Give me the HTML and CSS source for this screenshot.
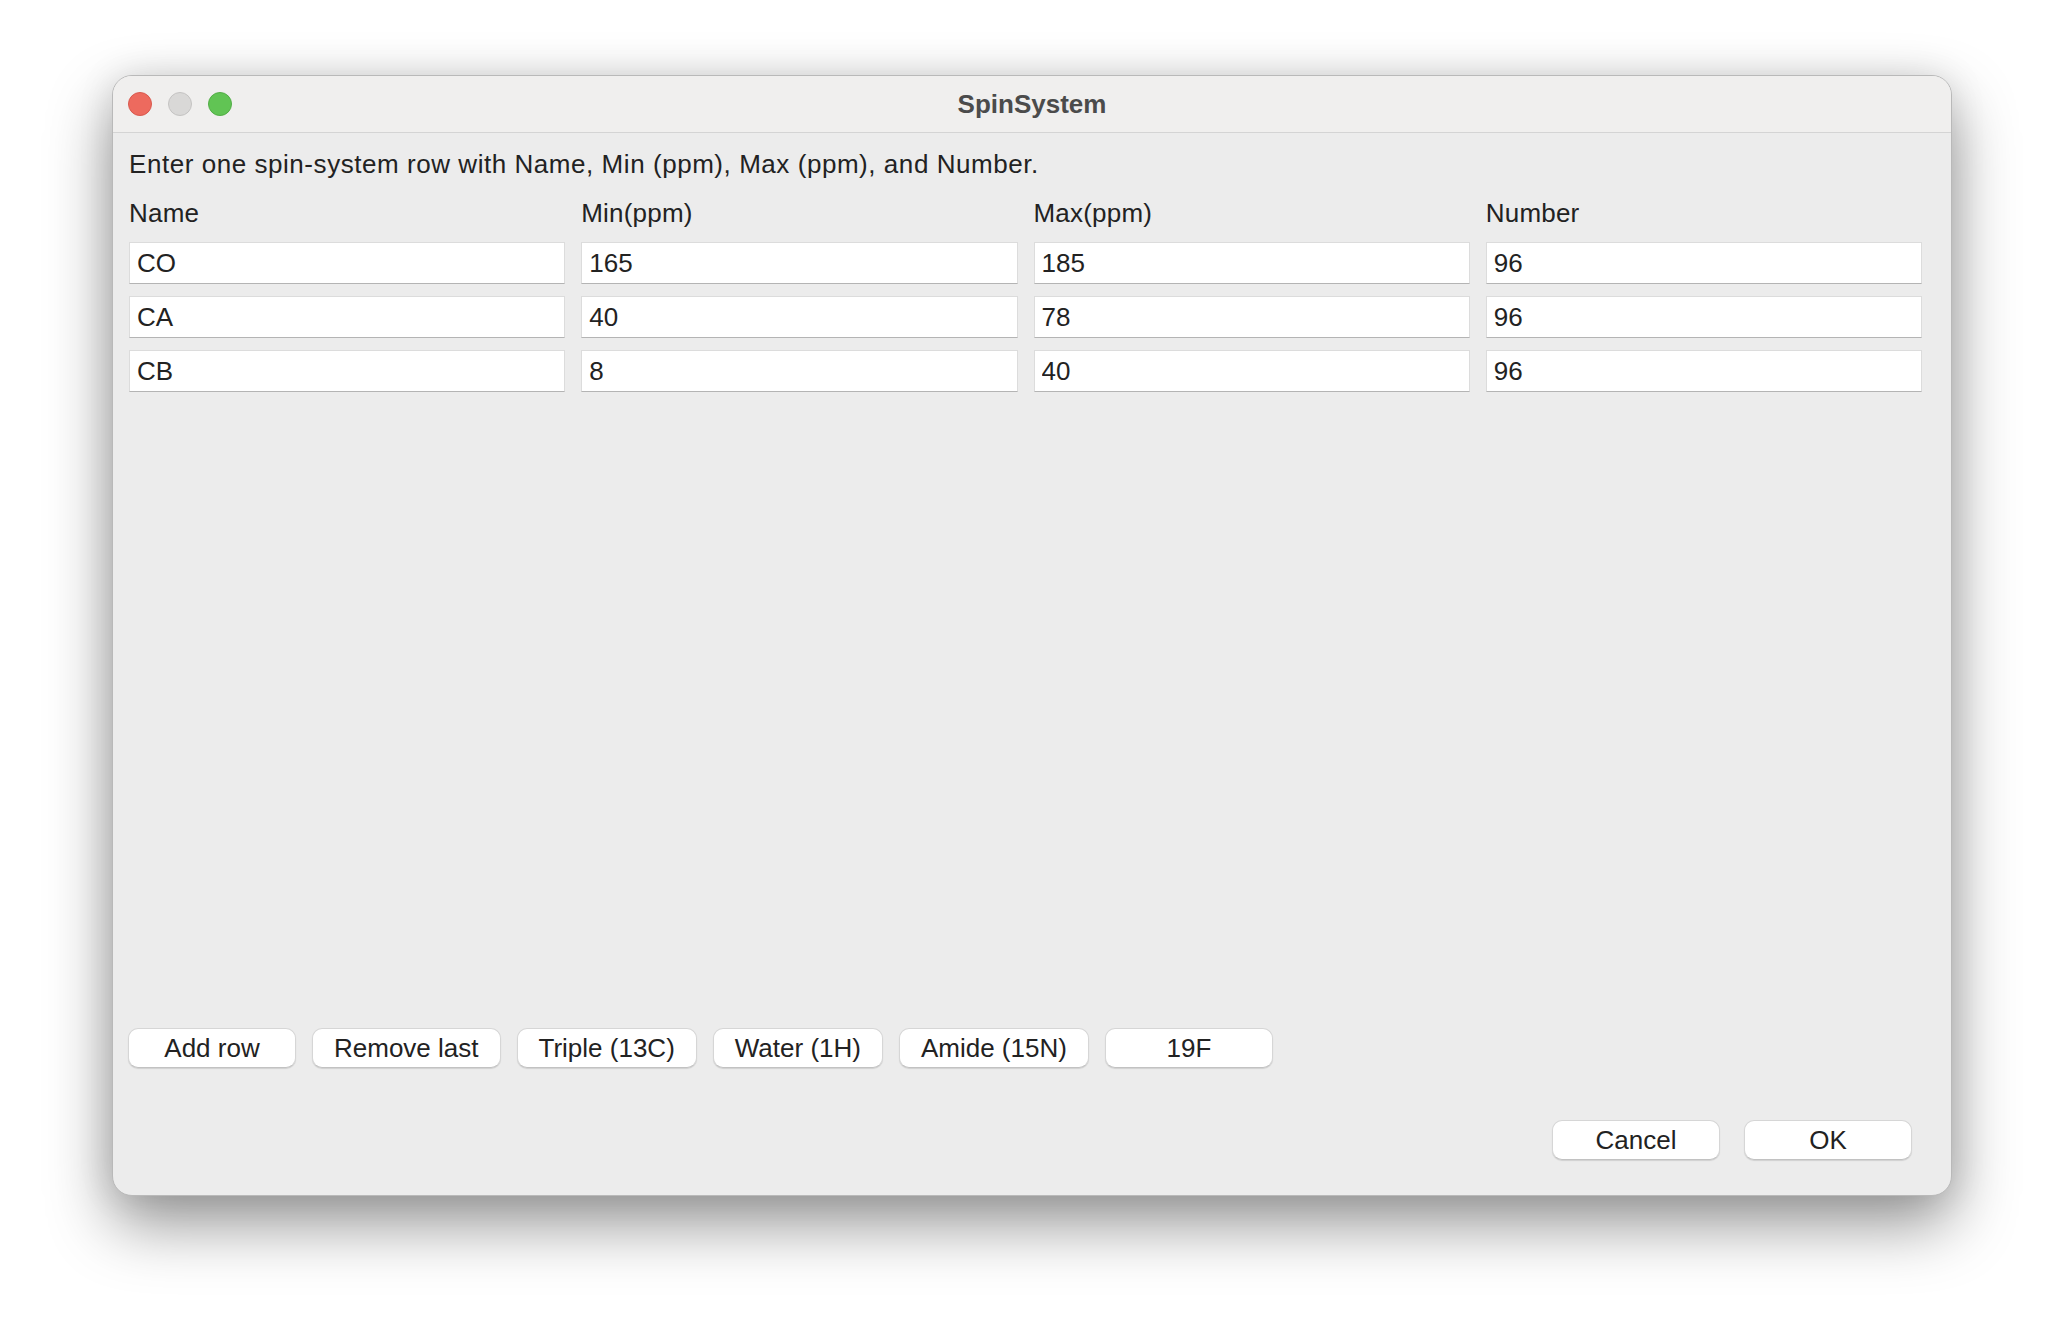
FILE: index.html
```html
<!DOCTYPE html>
<html>
	<head>
		<meta charset="UTF-8">
		<title>SpinSystem</title>
		<link rel="stylesheet" href="styles.css">
	</head>
	<body>
		<div class="window">
			<div class="titlebar">
				<div class="lights">
					<span class="light close"></span>
					<span class="light min"></span>
					<span class="light zoom"></span>
				</div>
				<div class="title">SpinSystem</div>
				<div></div>
			</div>

			<div class="content">
				<p class="hint">Enter one spin-system row with Name, Min (ppm), Max (ppm), and Number.</p>

				<div class="fields">
					<div class="head">Name</div>
					<div class="head">Min(ppm)</div>
					<div class="head">Max(ppm)</div>
					<div class="head">Number</div>

					<input class="cell" type="text" value="CO">
					<input class="cell" type="text" value="165">
					<input class="cell" type="text" value="185">
					<input class="cell" type="text" value="96">

					<input class="cell" type="text" value="CA">
					<input class="cell" type="text" value="40">
					<input class="cell" type="text" value="78">
					<input class="cell" type="text" value="96">

					<input class="cell" type="text" value="CB">
					<input class="cell" type="text" value="8">
					<input class="cell" type="text" value="40">
					<input class="cell" type="text" value="96">
				</div>

				<div class="tools">
					<button class="btn">Add row</button>
					<button class="btn">Remove last</button>
					<button class="btn">Triple (13C)</button>
					<button class="btn">Water (1H)</button>
					<button class="btn">Amide (15N)</button>
					<button class="btn">19F</button>
				</div>

				<div class="actions">
					<button class="btn">Cancel</button>
					<button class="btn">OK</button>
				</div>
			</div>
		</div>
	</body>
</html>
```

FILE: styles.css
```css
*{
	box-sizing: border-box;
}
html{
	background: #fff;
}
body{
	margin: 0;
	min-height: 1344px;
	padding: 75px 0 0 112px;
	background: #fff;
	font-family: "Liberation Sans", Arial, sans-serif;
	color: #222;
}
.window{
	width: 1840px;
	height: 1121px;
	display: flex;
	flex-direction: column;
	background: #ececec;
	border: 1px solid #b9b9b9;
	border-radius: 20px;
	overflow: hidden;
	box-shadow: 0 28px 64px rgba(0,0,0,.42), 0 0 36px rgba(0,0,0,.1);
}

/* title bar */
.titlebar{
	height: 57px;
	flex: none;
	display: grid;
	grid-template-columns: 1fr auto 1fr;
	align-items: center;
	background: #f0efee;
	border-bottom: 1px solid #d4d4d4;
}
.lights{
	display: flex;
	gap: 16px;
	padding-left: 15px;
}
.light{
	width: 24px;
	height: 24px;
	border-radius: 50%;
}
.close{
	background: #ed6a5e;
	border: 1px solid #d8594e;
}
.min{
	background: #d9d8d7;
	border: 1px solid #c4c3c2;
}
.zoom{
	background: #61c454;
	border: 1px solid #52ad46;
}
.title{
	font-weight: bold;
	font-size: 26px;
	line-height: 30px;
	color: #4b4b4b;
}

/* dialog body */
.content{
	flex: 1;
	display: flex;
	flex-direction: column;
	padding: 16px 29px 35px 16px;
}
.hint{
	margin: 0 0 19px;
	font-size: 26px;
	line-height: 30px;
	letter-spacing: .55px;
}
.fields{
	flex: 1;
	display: grid;
	grid-template-columns: repeat(4, 1fr);
	grid-template-rows: 32px;
	grid-auto-rows: 42px;
	column-gap: 16px;
	row-gap: 12px;
	align-content: start;
}
.head{
	font-size: 26px;
	line-height: 30px;
	letter-spacing: .2px;
}
.cell{
	width: 100%;
	height: 42px;
	margin: 0;
	padding: 0 7px;
	font-family: inherit;
	font-size: 26px;
	line-height: 40px;
	color: #222;
	background: #fff;
	border: 1px solid #dcdcdc;
	border-bottom-color: #b4b4b4;
	border-radius: 0;
	outline: none;
}

/* push buttons */
.tools,.actions{
	display: flex;
	gap: 16px;
}
.tools{
	margin-left: -1px;
}
.actions{
	justify-content: flex-end;
	gap: 24px;
	margin-top: 52px;
	padding-right: 10px;
}
.btn{
	height: 40px;
	min-width: 168px;
	padding: 0 21px;
	font-family: inherit;
	font-size: 26px;
	line-height: 38px;
	color: #222;
	background: #fff;
	border: 1px solid #d6d6d6;
	border-bottom-color: #c2c2c2;
	border-radius: 10px;
	box-shadow: 0 1px 1px rgba(0,0,0,.12);
}
```
